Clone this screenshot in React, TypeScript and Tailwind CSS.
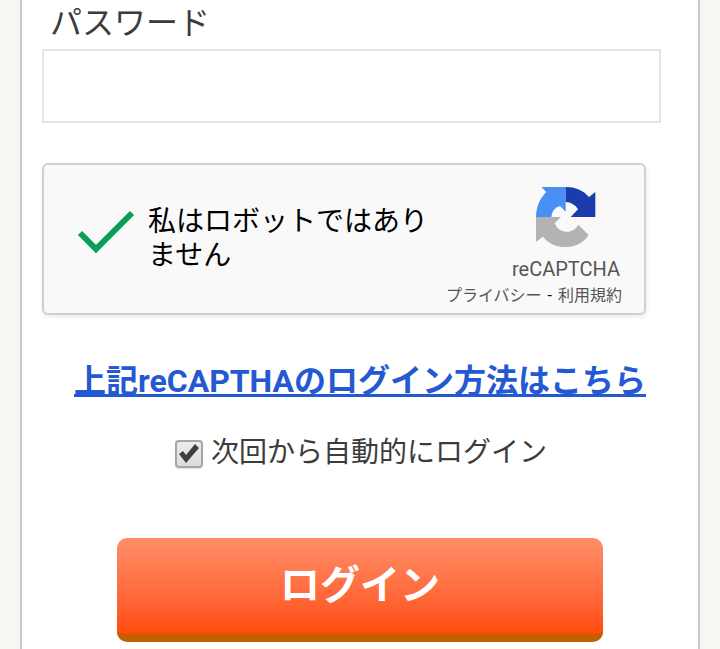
import { useState } from 'react';

function RecaptchaLogo() {
  return (
    <svg viewBox="0 0 180 180" className="h-15 w-15" aria-hidden="true">
      <path fill="#4a8ff5" d="M16 0H89V74L72 57Q48 64 46 90H0C1 60 11 34 31 15Z" />
      <path fill="#1b3cac" d="M89 0C118 0 142 10 159 30L178 15V90H104L126 67C117 52 104 46 89 45Z" />
      <path
        fill="#b3b3b3"
        d="M0 90H75L56 109C64 126 76 134 91 134C108 134 119 127 127 113L158 144C142 168 118 180 89 180C61 180 37 170 21 149L0 165Z"
      />
    </svg>
  );
}

function RecaptchaBox() {
  return (
    <div className="mr-8 flex h-38 justify-between rounded-md border-2 border-[#d0d0d0] bg-[#f9f9f9] pr-[22px] pl-8 shadow-[1px_2px_4px_rgba(0,0,0,0.08)]">
      <div className="flex min-w-0 items-center">
        <svg viewBox="0 0 60 44" className="mt-[-14px] h-11 w-15 shrink-0" aria-hidden="true">
          <path d="M4 23L20 39L56 3" fill="none" stroke="#0c9d58" strokeWidth="6" />
        </svg>
        <p className="ml-3 w-72 text-[28px] leading-[34px] text-black">私はロボットではありません</p>
      </div>
      <div className="flex shrink-0 flex-col items-end pt-[22px] text-[#555]">
        <div className="mr-0.5 flex flex-col items-center">
          <RecaptchaLogo />
          <span className="mt-2 text-xl leading-7">reCAPTCHA</span>
        </div>
        <div className="flex gap-1.5 pt-px text-base leading-6">
          <a href="#privacy">プライバシー</a>
          <span className="text-black">-</span>
          <a href="#terms">利用規約</a>
        </div>
      </div>
    </div>
  );
}

export default function App() {
  const [password, setPassword] = useState('');
  const [remember, setRemember] = useState(true);

  return (
    <div className="min-h-screen bg-[#f8f7f2] px-5 font-['Roboto','Noto_Sans_CJK_JP',sans-serif] text-[#3c3c3c]">
      <form
        className="min-h-screen border-x-2 border-[#c8c8c8] bg-white px-5 pb-1"
        onSubmit={(e) => e.preventDefault()}
      >
        <label htmlFor="password" className="block pt-[5px] pl-2 text-[32px] leading-9">
          パスワード
        </label>
        <div className="mt-2 mr-[17px]">
          <input
            id="password"
            type="password"
            value={password}
            onChange={(e) => setPassword(e.target.value)}
            className="block h-[74px] w-full border-2 border-[#e4e5e7] bg-white px-4 text-[32px]"
          />
        </div>

        <div className="mt-10">
          <RecaptchaBox />
        </div>

        <div className="mt-11 text-center">
          <a
            href="#help"
            className="text-[32px] leading-[44px] font-bold whitespace-nowrap text-[#2459d3] underline"
          >
            上記reCAPTHAのログイン方法はこちら
          </a>
        </div>

        <div className="mt-[30px] flex items-center justify-center gap-2 pl-0.5">
          <span className="relative mt-0.5 block h-7 w-7">
            <input
              id="remember"
              type="checkbox"
              checked={remember}
              onChange={(e) => setRemember(e.target.checked)}
              className="block h-7 w-7 appearance-none rounded-sm border-2 border-[#a6a6a6] bg-linear-to-b from-[#ececec] to-[#dcdcdc] shadow-[0_1px_1px_rgba(0,0,0,0.12)]"
            />
            {remember && (
              <svg viewBox="0 0 28 28" className="pointer-events-none absolute inset-0 h-7 w-7" aria-hidden="true">
                <path d="M4 14L8 11L11 15L20 4L24 8L11 23Z" fill="#404040" />
              </svg>
            )}
          </span>
          <label htmlFor="remember" className="text-[28px] leading-10">
            次回から自動的にログイン
          </label>
        </div>

        <div className="mt-[65px] flex justify-center">
          <button
            type="submit"
            className="h-26 w-[76.5%] rounded-[10px] border-b-8 border-[#c06000] bg-linear-to-b from-[#ff8e66] to-[#ff4a03] text-[40px] font-bold text-white"
          >
            ログイン
          </button>
        </div>
      </form>
    </div>
  );
}
